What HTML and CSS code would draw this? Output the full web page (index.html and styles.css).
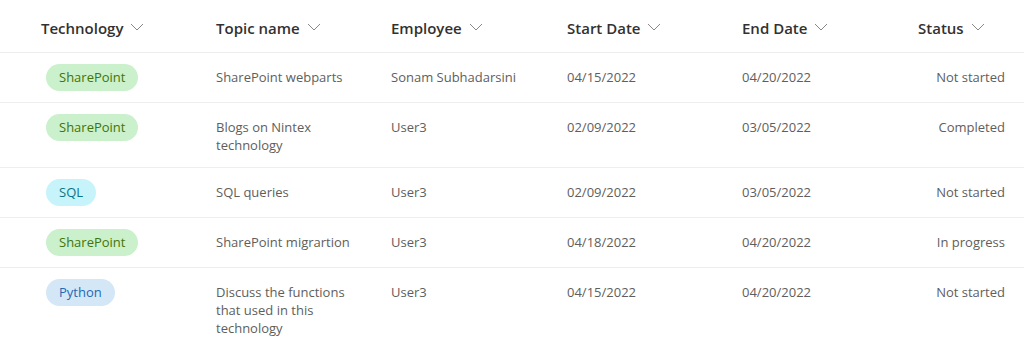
FILE: index.html
```html
<!DOCTYPE html>
<html lang="en">
<head>
    <meta charset="UTF-8">
    <title>Training topics</title>
    <link rel="stylesheet" href="styles.css">
</head>
<body>
    <div class="list">
        <div class="row header">
            <div class="col">Technology <svg class="chev" width="14" height="8" viewBox="0 0 14 8"><path d="M1 1l6 6 6-6"/></svg></div>
            <div class="col">Topic name <svg class="chev" width="14" height="8" viewBox="0 0 14 8"><path d="M1 1l6 6 6-6"/></svg></div>
            <div class="col">Employee <svg class="chev" width="14" height="8" viewBox="0 0 14 8"><path d="M1 1l6 6 6-6"/></svg></div>
            <div class="col">Start Date <svg class="chev" width="14" height="8" viewBox="0 0 14 8"><path d="M1 1l6 6 6-6"/></svg></div>
            <div class="col">End Date <svg class="chev" width="14" height="8" viewBox="0 0 14 8"><path d="M1 1l6 6 6-6"/></svg></div>
            <div class="col">Status <svg class="chev" width="14" height="8" viewBox="0 0 14 8"><path d="M1 1l6 6 6-6"/></svg></div>
        </div>

        <div class="row">
            <div class="cell pill-cell"><span class="pill green">SharePoint</span></div>
            <div class="cell">SharePoint webparts</div>
            <div class="cell">Sonam Subhadarsini</div>
            <div class="cell">04/15/2022</div>
            <div class="cell">04/20/2022</div>
            <div class="cell status">Not started</div>
        </div>

        <div class="row">
            <div class="cell pill-cell"><span class="pill green">SharePoint</span></div>
            <div class="cell wrap">Blogs on Nintex technology</div>
            <div class="cell">User3</div>
            <div class="cell">02/09/2022</div>
            <div class="cell">03/05/2022</div>
            <div class="cell status">Completed</div>
        </div>

        <div class="row">
            <div class="cell pill-cell"><span class="pill cyan">SQL</span></div>
            <div class="cell">SQL queries</div>
            <div class="cell">User3</div>
            <div class="cell">02/09/2022</div>
            <div class="cell">03/05/2022</div>
            <div class="cell status">Not started</div>
        </div>

        <div class="row">
            <div class="cell pill-cell"><span class="pill green">SharePoint</span></div>
            <div class="cell">SharePoint migrartion</div>
            <div class="cell">User3</div>
            <div class="cell">04/18/2022</div>
            <div class="cell">04/20/2022</div>
            <div class="cell status">In progress</div>
        </div>

        <div class="row">
            <div class="cell pill-cell"><span class="pill blue">Python</span></div>
            <div class="cell wrap">Discuss the functions that used in this technology</div>
            <div class="cell">User3</div>
            <div class="cell">04/15/2022</div>
            <div class="cell">04/20/2022</div>
            <div class="cell status">Not started</div>
        </div>
    </div>
</body>
</html>
```

FILE: styles.css
```css
body {
    margin: 0;
    background: #fff;
    font-family: "Open Sans", "Noto Sans", sans-serif;
    overflow: hidden;
}
.row {
    display: grid;
    grid-template-columns: 175px 175px 176px 175px 176px 1fr;
    padding: 0 19px 0 41px;
    border-bottom: 1px solid #f0eeec;
}
.header {
    align-items: center;
    padding-top: 4px;
    box-sizing: border-box;
    height: 53px;
}
.col {
    font-size: 15px;
    font-weight: 600;
    color: #323130;
    display: flex;
    align-items: center;
    gap: 7px;
}
.chev {
    fill: none;
    stroke: #8a8886;
    stroke-width: 1;
    margin-top: -2px;
}
.cell {
    font-size: 13px;
    line-height: 18px;
    color: #605e5c;
    padding: 15px 0 13px;
    white-space: nowrap;
}
.cell.wrap {
    white-space: normal;
    padding-right: 40px;
}
.pill-cell {
    padding: 11px 0;
}
.status {
    text-align: right;
}
.pill {
    display: inline-block;
    margin-left: 5px;
    height: 27px;
    line-height: 27px;
    padding: 0 13px;
    border-radius: 14px;
    font-size: 13px;
}
.green {
    background: #caf0cc;
    color: #437406;
}
.cyan {
    background: #c6f4fa;
    color: #0e7383;
}
.blue {
    background: #d4e7f6;
    color: #1d6ab5;
}
```
